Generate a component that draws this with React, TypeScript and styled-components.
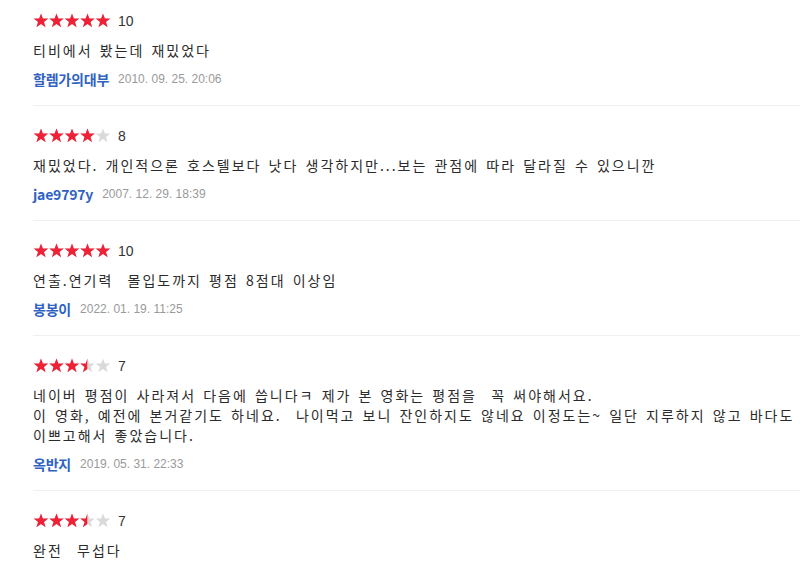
import { useId } from 'react';
import styled, { createGlobalStyle } from 'styled-components';

type Review = {
  id: number;
  score: number;
  text: string;
  author: string;
  date: string;
};

const reviews: Review[] = [
  {
    id: 1,
    score: 10,
    text: '티비에서 봤는데 재밌었다',
    author: '할렘가의대부',
    date: '2010. 09. 25. 20:06',
  },
  {
    id: 2,
    score: 8,
    text: '재밌었다. 개인적으론 호스텔보다 낫다 생각하지만...보는 관점에 따라 달라질 수 있으니깐',
    author: 'jae9797y',
    date: '2007. 12. 29. 18:39',
  },
  {
    id: 3,
    score: 10,
    text: '연출.연기력  몰입도까지 평점 8점대 이상임',
    author: '봉봉이',
    date: '2022. 01. 19. 11:25',
  },
  {
    id: 4,
    score: 7,
    text:
      '네이버 평점이 사라져서 다음에 씁니다ㅋ 제가 본 영화는 평점을  꼭 써야해서요.\n이 영화, 예전에 본거같기도 하네요.  나이먹고 보니 잔인하지도 않네요 이정도는~ 일단 지루하지 않고 바다도 이쁘고해서 좋았습니다.',
    author: '옥반지',
    date: '2019. 05. 31. 22:33',
  },
  {
    id: 5,
    score: 7,
    text: '완전  무섭다',
    author: '',
    date: '',
  },
];

const STAR =
  'M8 0.4 L9.9 5.5 L15.3 5.6 L11 8.9 L12.6 14.2 L8 11.1 L3.4 14.2 L5 8.9 L0.7 5.6 L6.1 5.5 Z';

const Stars = ({ score }: { score: number }) => {
  const id = useId();
  const filled = score / 2;
  const pitch = 15.5;
  return (
    <StarSvg width={78} height={16} viewBox="0 0 78 16">
      <defs>
        <clipPath id={id}>
          <rect x={0} y={0} width={filled * pitch} height={16} />
        </clipPath>
      </defs>
      {[0, 1, 2, 3, 4].map((i) => (
        <path key={'g' + i} d={STAR} transform={`translate(${i * pitch} 0)`} fill="#dadada" />
      ))}
      <g clipPath={`url(#${id})`}>
        {[0, 1, 2, 3, 4].map((i) => (
          <path key={'r' + i} d={STAR} transform={`translate(${i * pitch} 0)`} fill="#ef2136" />
        ))}
      </g>
    </StarSvg>
  );
};

const App = () => {
  return (
    <>
      <GlobalStyle />
      <List>
        {reviews.map((review) => (
          <Item key={review.id}>
            <RatingRow>
              <Stars score={review.score} />
              <Score>{review.score}</Score>
            </RatingRow>
            <Content>{review.text}</Content>
            {review.author && (
              <Meta>
                <Author>{review.author}</Author>
                <Date>{review.date}</Date>
              </Meta>
            )}
          </Item>
        ))}
      </List>
    </>
  );
};

export default App;

const GlobalStyle = createGlobalStyle`
  html, body {
    margin: 0;
    padding: 0;
    background: #fff;
  }
  body {
    font-family: "Noto Sans CJK KR", "Noto Sans", sans-serif;
    color: #333;
  }
`;

const List = styled.ul`
  list-style: none;
  margin: 0;
  padding: 0 0 0 33px;
  width: 800px;
  box-sizing: border-box;
  overflow: hidden;
  height: 561px;
`;

const Item = styled.li`
  display: flex;
  flex-direction: column;
  padding: 22px 0 18px;
  border-bottom: 1px solid #f0f0f0;

  &:first-child {
    padding-top: 13px;
  }
`;

const RatingRow = styled.div`
  display: flex;
  align-items: center;
  height: 16px;
`;

const StarSvg = styled.svg`
  display: block;
`;

const Score = styled.span`
  margin-left: 7px;
  font-family: "Liberation Sans", sans-serif;
  font-size: 14px;
  color: #333;
`;

const Content = styled.p`
  margin: 11px 0 0;
  font-size: 14px;
  line-height: 20px;
  letter-spacing: 2px;
  word-spacing: 2px;
  color: #2b2b2b;
  white-space: pre-wrap;
  word-break: keep-all;
  width: 790px;
`;

const Meta = styled.div`
  display: flex;
  align-items: center;
  gap: 9px;
  height: 16px;
  margin-top: 11px;
`;

const Author = styled.span`
  font-size: 14px;
  font-weight: 700;
  color: #2f62c1;
  letter-spacing: -0.2px;
`;

const Date = styled.span`
  font-family: "Liberation Sans", sans-serif;
  font-size: 12px;
  color: #9a9a9a;
`;
